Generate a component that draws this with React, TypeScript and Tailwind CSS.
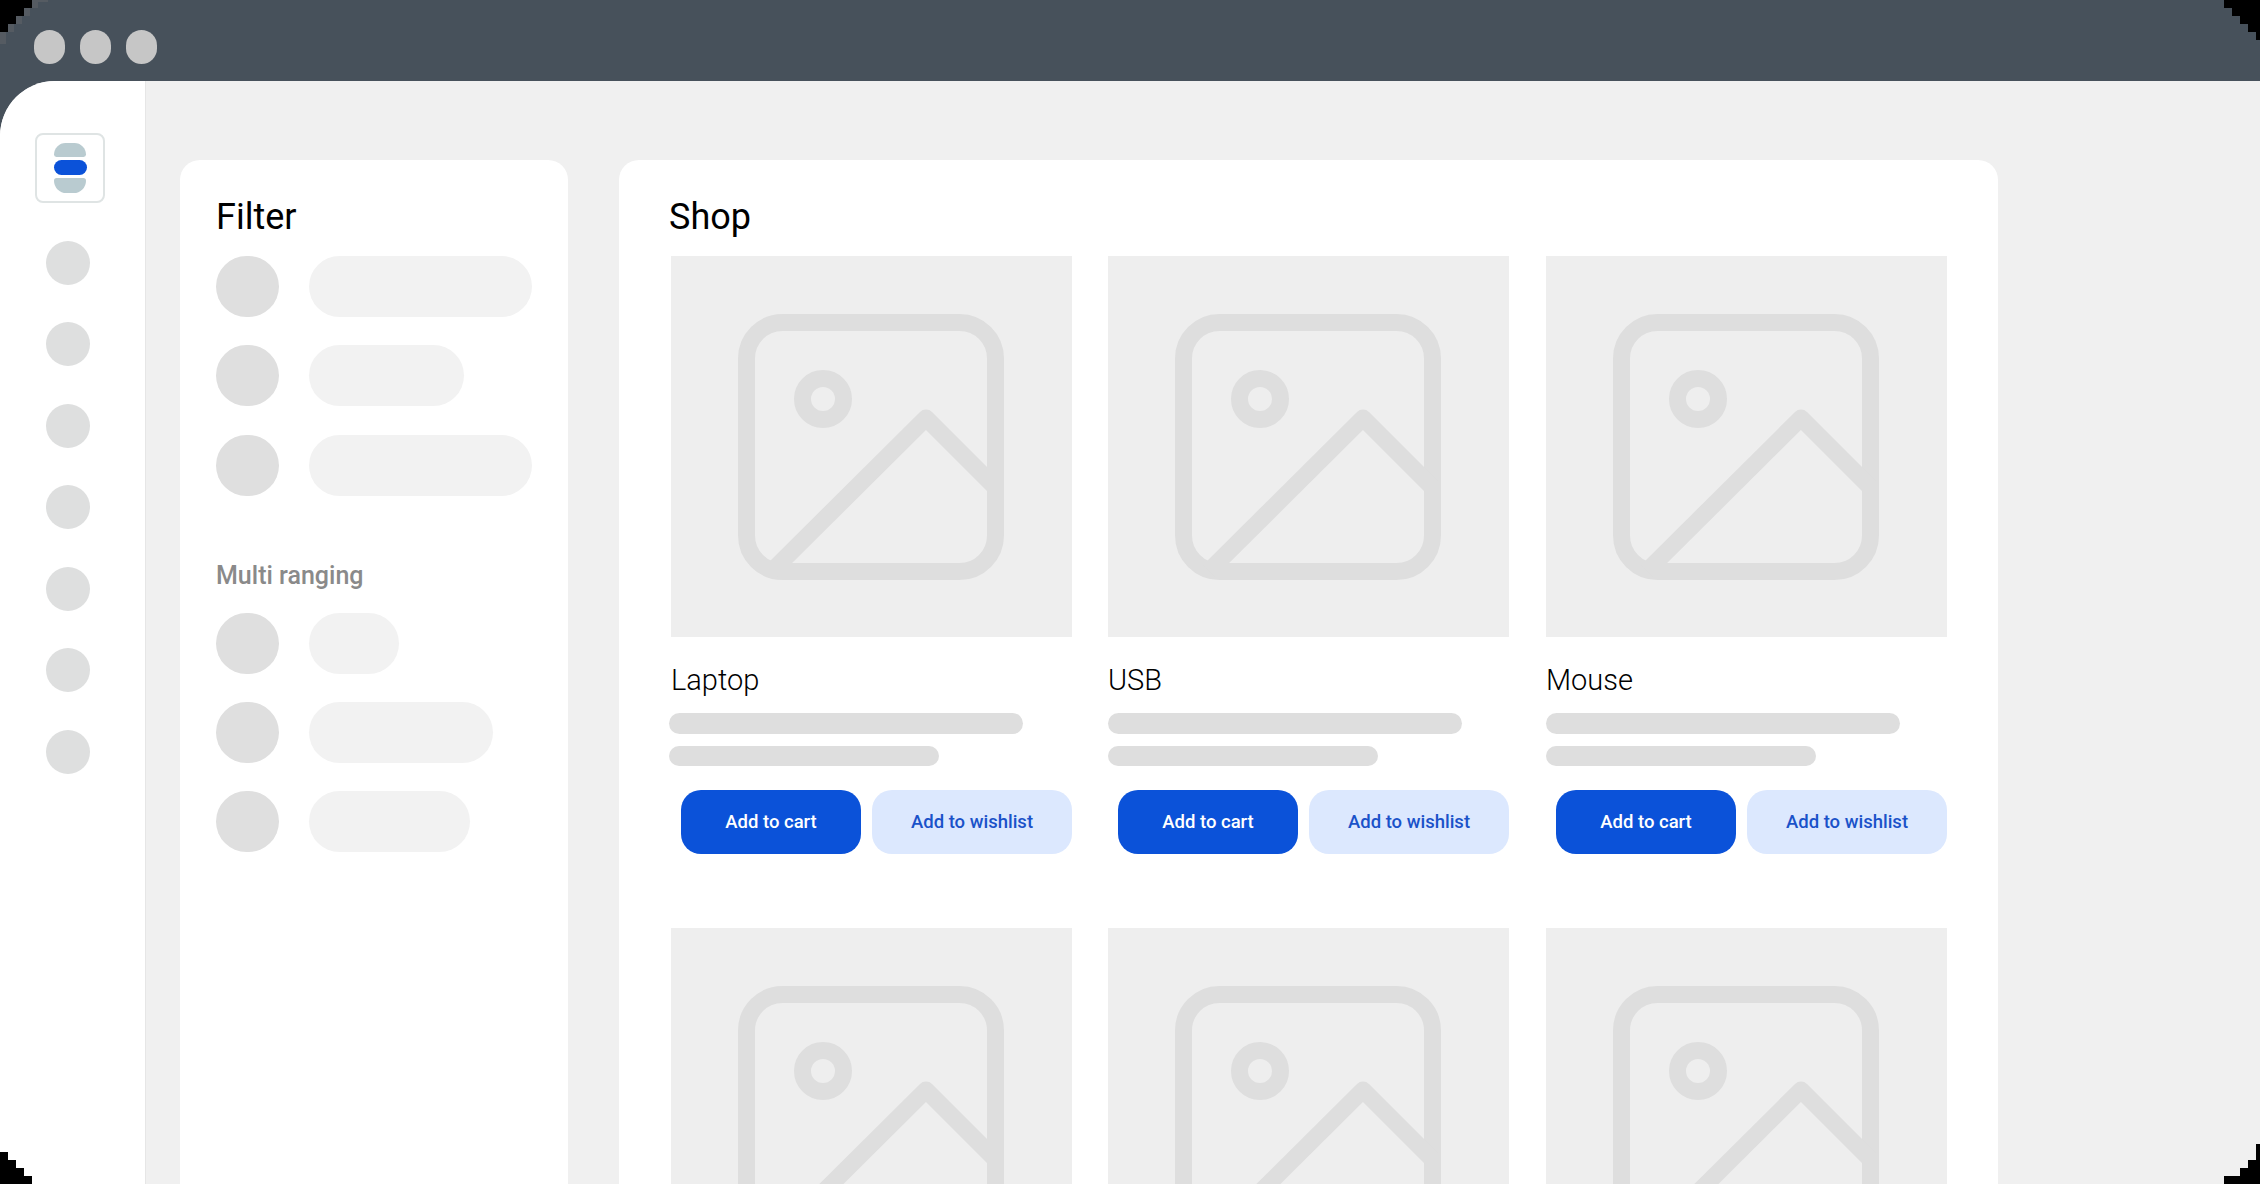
import React from 'react'

const DISPLAY_FONT = 'font-["Roboto",sans-serif]'

const filterRows = [223, 155, 223]
const rangeRows = [90, 184, 161]
const products = ['Laptop', 'USB', 'Mouse']

// the pixelated black corners of the window frame
function FrameCorners() {
  return (
    <svg className="absolute inset-0 pointer-events-none" width="2260" height="1184" viewBox="0 0 2260 1184">
      <path d="M0 0H32V8H24V16H16V24H8V32H0Z" fill="#000" />
      <path d="M32 0H48V2H38V8H30V16H22V24H14V32H6V44H0V32H8V24H16V16H24V8H32Z" fill="#555b62" />
      <path d="M2260 0H2224V8H2232V16H2240V24H2248V32H2256V40H2260Z" fill="#000" />
      <path d="M0 1184V1152H8V1160H16V1168H24V1176H32V1184Z" fill="#000" />
      <path d="M2260 1184V1144H2256V1160H2248V1168H2240V1176H2224V1184Z" fill="#000" />
    </svg>
  )
}

function Logo() {
  return (
    <div className="w-[70px] h-[70px] rounded-[8px] border-2 border-[#dfe4e4] bg-white flex flex-col items-center justify-center gap-[3px]">
      <div className="w-[32px] h-[14px] rounded-t-[14px] rounded-b-[3px] bg-[#b9cbd0]" />
      <div className="w-[33px] h-[15px] rounded-full bg-[#0b52d9]" />
      <div className="w-[32px] h-[15px] rounded-b-[14px] rounded-t-[3px] bg-[#b9cbd0]" />
    </div>
  )
}

function Sidebar() {
  return (
    <aside className="w-[146px] shrink-0 bg-white border-r border-[#e6e6e6] pl-[35px] pt-[52px] flex flex-col items-start gap-[37.5px]">
      <Logo />
      {[0, 1, 2, 3, 4, 5, 6].map(i => (
        <div key={i} className="ml-[11px] w-[44px] h-[44px] rounded-full bg-[#dedfdf]" />
      ))}
    </aside>
  )
}

function FilterRow({ width }: { width: number }) {
  return (
    <div className="flex items-center gap-[30px]">
      <div className="w-[63px] h-[61px] rounded-full bg-[#dfdfdf]" />
      <div className="h-[61px] rounded-full bg-[#f2f2f2]" style={{ width }} />
    </div>
  )
}

function FilterPanel() {
  return (
    <section className="w-[388px] shrink-0 rounded-t-[20px] bg-white pl-[36px] pt-[36px]">
      <h2 className={`${DISPLAY_FONT} h-[42px] mb-[18px] text-[36px] leading-[42px] font-[450] text-black`}>Filter</h2>
      <div className="flex flex-col gap-[28.25px]">
        {filterRows.map((w, i) => <FilterRow key={i} width={w} />)}
      </div>
      <h3 className={`${DISPLAY_FONT} mt-[65.5px] mb-[22px] h-[30px] text-[25px] leading-[30px] font-medium text-[#8a8a8a]`}>Multi ranging</h3>
      <div className="flex flex-col gap-[28px]">
        {rangeRows.map((w, i) => <FilterRow key={i} width={w} />)}
      </div>
    </section>
  )
}

function ImagePlaceholder() {
  return (
    <div className="w-[401px] h-[381px] bg-[#eeeeee] flex items-center justify-center">
      <svg className="-ml-[2px]" width="266" height="266" viewBox="0 0 266 266" fill="none" stroke="#dedede" strokeWidth="17" strokeLinejoin="round">
        <rect x="8.5" y="8.5" width="249" height="249" rx="36" />
        <circle cx="85" cy="85" r="20.5" />
        <path d="M34 257L188 104L257 173" />
      </svg>
    </div>
  )
}

function ProductCard({ name, first }: { name: string; first: boolean }) {
  return (
    <div className="w-[401px]">
      <ImagePlaceholder />
      <div className={`${DISPLAY_FONT} mt-[25px] h-[36px] text-[29px] leading-[36px] font-light text-black`}>{name}</div>
      <div className={first ? 'mt-[15px] -ml-[2px]' : 'mt-[15px]'}>
        <div className="w-[354px] h-[21px] rounded-full bg-[#dedede]" />
        <div className="mt-[12px] w-[270px] h-[20px] rounded-full bg-[#dedede]" />
      </div>
      <div className={`${DISPLAY_FONT} mt-[24px] flex justify-end gap-[11px]`}>
        <button className="w-[180px] h-[64px] pt-[2px] rounded-[20px] bg-[#0b52d9] text-[18.5px] font-medium text-white">Add to cart</button>
        <button className="w-[200px] h-[64px] pt-[2px] rounded-[20px] bg-[#dce8fe] text-[18.5px] font-medium text-[#1a52c9]">Add to wishlist</button>
      </div>
    </div>
  )
}

function ShopPanel() {
  return (
    <section className="w-[1379px] shrink-0 rounded-t-[20px] bg-white pl-[52px] pt-[36px]">
      <h2 className={`${DISPLAY_FONT} -ml-[2px] h-[42px] mb-[18px] text-[36px] leading-[42px] font-[450] text-black`}>Shop</h2>
      <div className="grid grid-cols-[401px_402px_401px] gap-x-[36px] gap-y-[74px]">
        {products.map((p, i) => <ProductCard key={p} name={p} first={i === 0} />)}
        {products.map(p => <ImagePlaceholder key={p} />)}
      </div>
    </section>
  )
}

export default function App() {
  return (
    <div className="relative w-[2260px] h-[1184px] overflow-hidden bg-[#47515b] flex flex-col">
      <header className="h-[81px] shrink-0 pl-[34px] pt-[30px] flex items-start gap-[15px]">
        {[0, 1, 2].map(i => (
          <div key={i} className="w-[31px] h-[34px] rounded-full bg-[#c6c6c6]" />
        ))}
      </header>
      <div className="flex-1 min-h-0 flex overflow-hidden rounded-tl-[55px] bg-[#f0f0f0]">
        <Sidebar />
        <main className="flex-1 pl-[34px] pt-[79px] flex items-stretch gap-[51px]">
          <FilterPanel />
          <ShopPanel />
        </main>
      </div>
      <FrameCorners />
    </div>
  )
}
